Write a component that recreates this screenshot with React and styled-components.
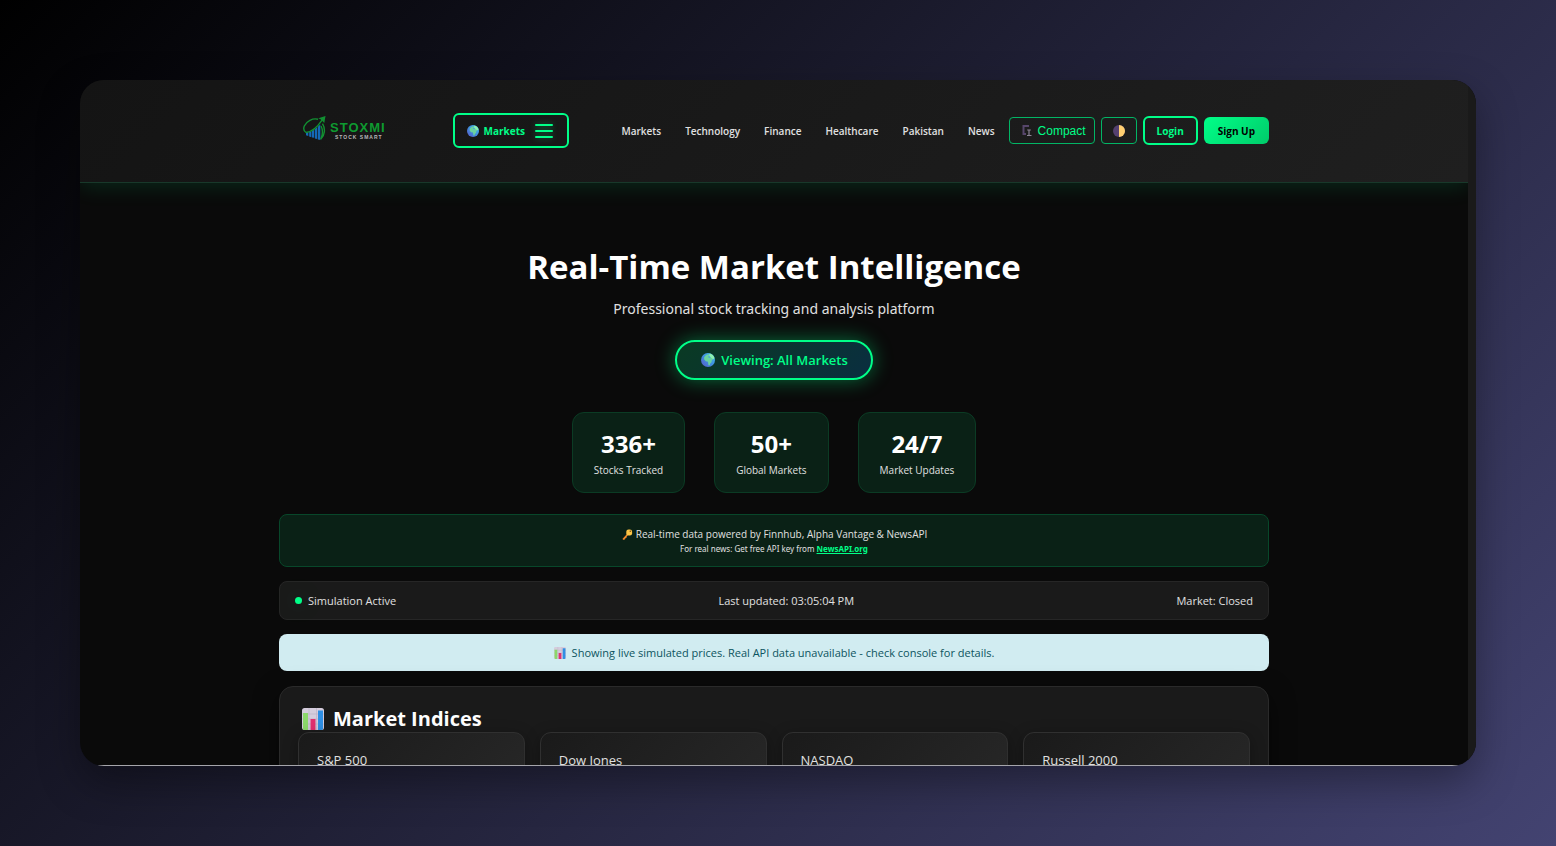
import styled, { createGlobalStyle, css } from "styled-components";

const GlobalStyle = createGlobalStyle`
  * {
    box-sizing: border-box;
    margin: 0;
    padding: 0;
  }
  body {
    font-family: "Open Sans", "Noto Sans", sans-serif;
    color: #e0e0e0;
    background-color: #000;
  }
  button {
    font-family: inherit;
    cursor: pointer;
  }
`;

const Backdrop = styled.div`
  display: flex;
  height: 100vh;
  padding: 80px;
  background: linear-gradient(135deg, #000 0%, #434371 100%);
`;

const Window = styled.div`
  flex: 1;
  display: flex;
  min-width: 0;
  border-radius: 24px;
  overflow: hidden;
  background-color: #0a0a0a;
  box-shadow: 0 16px 40px rgba(0, 0, 0, 0.35);
`;

const Page = styled.div`
  flex: 1;
  min-width: 0;
  overflow: hidden;
  border-bottom: 1px solid #a5a5ab;
`;

const ScrollTrack = styled.div`
  width: 8px;
  background-color: #1a1a1a;
`;

// HEADER
const Header = styled.header`
  padding: 33px 0 34px;
  background: linear-gradient(135deg, #141414, #1f1f1f);
  border-bottom: 1px solid #18382a;
  box-shadow: 0 4px 20px rgba(0, 255, 136, 0.12);
`;

const Container = styled.div`
  width: 100%;
  max-width: 990px;
  margin: 0 auto;
`;

const HeaderRow = styled(Container)`
  display: flex;
  align-items: center;
  padding-left: 24px;
`;

const Logo = styled.a`
  display: flex;
  align-items: flex-start;
  gap: 4px;
  height: 30px;
  margin-right: 67px;
  text-decoration: none;
  & > svg {
    width: 23px;
    height: 24px;
  }
`;

const LogoText = styled.span`
  display: flex;
  flex-direction: column;
  align-items: flex-end;
  padding-top: 6px;
  font-family: "Liberation Sans", Arial, sans-serif;
  font-weight: 700;
`;

const LogoName = styled.span`
  font-size: 13px;
  line-height: 12px;
  letter-spacing: 1px;
  color: #0e9a30;
`;

const LogoTagline = styled.span`
  font-size: 5px;
  line-height: 6px;
  letter-spacing: 1px;
  color: #b8b8b8;
  padding-right: 3px;
`;

const outline = css`
  background: transparent;
  color: #00ff88;
  border: 2px solid #00ff88;
`;

const MarketsButton = styled.button`
  ${outline}
  display: flex;
  align-items: center;
  height: 35px;
  padding: 0 14px 0 12px;
  border-radius: 6px;
  font-size: 10px;
  font-weight: 700;
  & > svg {
    margin-right: 5px;
  }
`;

const Burger = styled.span`
  display: flex;
  flex-direction: column;
  gap: 4px;
  width: 18px;
  margin-left: 10px;
  & > i {
    height: 2px;
    border-radius: 1px;
    background-color: #00ff88;
    box-shadow: 0 0 6px rgba(0, 255, 136, 0.4);
  }
`;

const Nav = styled.nav`
  display: flex;
  gap: 24px;
  margin-left: auto;
  & > a {
    color: #e0e0e0;
    font-size: 10px;
    font-weight: 600;
    text-decoration: none;
  }
`;

const Actions = styled.div`
  display: flex;
  align-items: center;
  gap: 6px;
  margin-left: 14px;
`;

const ToggleButton = styled.button`
  ${outline}
  display: flex;
  align-items: center;
  gap: 5px;
  height: 27px;
  padding: ${(props) => (props.$wide ? "0 8px 0 11px" : "0 11px")};
  border-width: 1px;
  border-color: #02b565;
  border-radius: 4px;
  & > span {
    font-family: "Liberation Sans", Arial, sans-serif;
    font-size: 12px;
  }
`;

const LoginButton = styled.button`
  ${outline}
  height: 29px;
  padding: 0 12px;
  border-radius: 6px;
  font-size: 10px;
  font-weight: 700;
`;

const SignUpButton = styled.button`
  height: 27px;
  padding: 0 14px;
  border: none;
  border-radius: 6px;
  background: linear-gradient(135deg, #00ff88, #00cc6a);
  color: #000;
  font-size: 10px;
  font-weight: 700;
`;

// HERO
const Hero = styled.section`
  display: flex;
  flex-direction: column;
  align-items: center;
  padding: 60px 0 21px;
`;

const Title = styled.h1`
  color: #fff;
  font-size: 33px;
  line-height: 48px;
  font-weight: 700;
`;

const Subtitle = styled.p`
  margin-top: 6px;
  font-family: "Noto Sans", sans-serif;
  font-size: 14px;
  line-height: 24px;
`;

const ViewingPill = styled.button`
  display: flex;
  align-items: center;
  gap: 6px;
  height: 40px;
  margin-top: 19px;
  padding: 0 23px 0 24px;
  border: 2px solid #00ff88;
  border-radius: 20px;
  background: linear-gradient(135deg, #0a3a23, #0a2e40);
  box-shadow: 0 0 20px rgba(0, 255, 136, 0.4);
  color: #00ff88;
  font-size: 13px;
  font-weight: 600;
`;

const Stats = styled.div`
  display: flex;
  gap: 29px;
  margin-top: 32px;
`;

const Stat = styled.div`
  padding: 15px 21px 14px;
  border: 1px solid #0b3b24;
  border-radius: 12px;
  background-color: #0a2116;
  text-align: center;
`;

const StatValue = styled.div`
  color: #fff;
  font-size: 24px;
  line-height: 32px;
  font-weight: 700;
`;

const StatLabel = styled.div`
  font-size: 10px;
  line-height: 16px;
  margin-top: 2px;
`;

// NOTICES
const ApiNotice = styled.div`
  padding: 11px 16px 10px;
  border: 1px solid #08472a;
  border-radius: 8px;
  background-color: #0a2116;
  text-align: center;
  font-size: 10px;
  line-height: 16px;
  & svg {
    vertical-align: middle;
    margin-right: 3px;
  }
  & small {
    display: block;
    font-family: "Noto Sans", sans-serif;
    font-size: 8px;
    line-height: 14px;
  }
  & a {
    color: #00ff88;
    font-weight: 700;
  }
`;

const StatusBar = styled.div`
  display: flex;
  align-items: center;
  justify-content: space-between;
  margin-top: 14px;
  padding: 9px 15px;
  border: 1px solid #262626;
  border-radius: 8px;
  background-color: #1a1a1a;
  font-size: 11px;
  line-height: 19px;
`;

const Status = styled.span`
  display: flex;
  align-items: center;
  gap: 6px;
  &::before {
    content: "";
    width: 7px;
    height: 7px;
    border-radius: 50%;
    background-color: #00ff88;
    box-shadow: 0 0 30px rgba(0, 255, 136, 0.3);
  }
`;

const Alert = styled.div`
  display: flex;
  align-items: center;
  justify-content: center;
  gap: 6px;
  margin-top: 14px;
  padding: 9px;
  border-radius: 8px;
  background-color: #d1ecf1;
  color: #0c5460;
  font-size: 11px;
  line-height: 19px;
`;

// INDICES
const Panel = styled.section`
  margin-top: 15px;
  padding: 18px;
  border: 1px solid #2a2a2a;
  border-radius: 14px;
  background-color: #1a1a1a;
  box-shadow: 0 8px 24px rgba(0, 0, 0, 0.5);
`;

const PanelTitle = styled.h2`
  display: flex;
  align-items: center;
  gap: 9px;
  padding-left: 4px;
  color: #fff;
  font-size: 20px;
  line-height: 27px;
`;

const Cards = styled.div`
  display: grid;
  grid-template-columns: repeat(4, 1fr);
  gap: 15px;
`;

const Card = styled.div`
  height: 120px;
  padding: 18px;
  border: 1px solid #303030;
  border-radius: 11px;
  background: linear-gradient(135deg, #1a1a1a, #2a2a2a);
  box-shadow: 0 4px 16px rgba(0, 0, 0, 0.3);
  font-size: 13px;
  line-height: 18px;
`;

const LogoMark = () => (
  <svg viewBox="0 0 23 24" fill="none">
    <path
      d="M3 16.500l2.300-.4v4l-2.300-.8zM6.200 15.800l2.200-.6v6l-2.200-.7zM9 14.700l2.200-.9v8l-2.200-.3zM11.900 13l2.200-1.500v11.500l-2.200-.5zM14.800 10.800l2.500-2.300V24l-2.500-.5z"
      fill="#1469b8"
    />
    <path
      d="M15 3.200C9.500 2 3.500 5 1.300 10c-1 2.800-.3 5.400 1.700 6.500C9 16 14.500 11 19 4.200M19.500 7.700c3 5 2.500 11.500-1.800 15.600 2-4.500 2.300-9.500.3-13.300"
      stroke="#128f32"
      strokeWidth="1.400"
    />
    <path d="M15.300 2.300L22.500 0l-1.200 7-2-1.900-1.800-1.800z" fill="#128f32" />
  </svg>
);

const GlobeIcon = ({ size }) => (
  <svg width={size} height={size} viewBox="0 0 16 16">
    <defs>
      <linearGradient id="ocean" x1="0" y1="1" x2="1" y2="0">
        <stop offset="0" stopColor="#5a58c8" />
        <stop offset="0.5" stopColor="#3f8fe0" />
        <stop offset="1" stopColor="#45c0f0" />
      </linearGradient>
    </defs>
    <circle cx="8" cy="8" r="8" fill="url(#ocean)" />
    <path
      d="M3.500 5C5 2.500 7 1.500 9 1.500l.5 1.500-1.500 1.500 1.500 1 3-.5 1.500 2-1.500 1-.5 2.500-1.500 1.500-.5 2H8.500l-.5-4-2.500-.5-1.800-2z"
      fill="#6ad2a0"
    />
    <path d="M9.500.6c3 .5 5.200 2.500 6 5.400l-1.500 1-2.500-1.500-2-2z" fill="#8cf0b0" />
  </svg>
);

const ChartIcon = ({ size }) => (
  <svg width={size} height={size} viewBox="0 0 22 22">
    <rect width="22" height="22" rx="2.500" fill="#d5cddd" />
    <path d="M0 6h22M0 11h22M0 16h22M7 0v22M14.500 0v22" stroke="#b8aec4" strokeWidth="0.6" />
    <path d="M1 5h5v17H2.500A1.500 1.500 0 0 1 1 20.500z" fill="#8bd76a" />
    <path d="M8.500 11h5v11h-5z" fill="#e0306f" />
    <path d="M16 2.500h5v18a1.500 1.500 0 0 1-1.500 1.500H16z" fill="#2f8fe4" />
  </svg>
);

const KeyIcon = () => (
  <svg width="12" height="12" viewBox="0 0 12 12" fill="none">
    <path d="M7 5L2 10.500M3 9.300l1 1M4.500 7.700l.9.9" stroke="#f08a2c" strokeWidth="1.600" />
    <rect x="5.300" y="0.600" width="5.800" height="5.800" rx="2.200" fill="#fcc545" />
    <circle cx="9.300" cy="2.300" r="0.800" fill="#7a4a1c" />
  </svg>
);

const ClampIcon = () => (
  <svg width="12" height="13" viewBox="0 0 12 13" fill="none">
    <path d="M8 2H2.500v8H5" stroke="#57466b" strokeWidth="2" />
    <path d="M8 5.500v5.500M6.200 6h3.600M6 11.500h4.500" stroke="#8d8496" strokeWidth="1.200" />
  </svg>
);

const HalfMoonIcon = () => (
  <svg width="12" height="12" viewBox="0 0 12 12">
    <circle cx="6" cy="6" r="6" fill="#54406f" />
    <path d="M6 0a6 6 0 0 1 0 12z" fill="#ffcf70" />
  </svg>
);

const navLinks = ["Markets", "Technology", "Finance", "Healthcare", "Pakistan", "News"];

const stats = [
  { value: "336+", label: "Stocks Tracked" },
  { value: "50+", label: "Global Markets" },
  { value: "24/7", label: "Market Updates" },
];

const indices = ["S&P 500", "Dow Jones", "NASDAQ", "Russell 2000"];

function App() {
  return (
    <Backdrop>
      <GlobalStyle />
      <Window>
        <Page>
          <Header>
            <HeaderRow>
              <Logo href="#">
                <LogoMark />
                <LogoText>
                  <LogoName>STOXMI</LogoName>
                  <LogoTagline>STOCK SMART</LogoTagline>
                </LogoText>
              </Logo>
              <MarketsButton>
                <GlobeIcon size={12} />
                Markets
                <Burger>
                  <i />
                  <i />
                  <i />
                </Burger>
              </MarketsButton>
              <Nav>
                {navLinks.map((link) => (
                  <a key={link} href="#">
                    {link}
                  </a>
                ))}
              </Nav>
              <Actions>
                <ToggleButton $wide>
                  <ClampIcon />
                  <span>Compact</span>
                </ToggleButton>
                <ToggleButton aria-label="Theme">
                  <HalfMoonIcon />
                </ToggleButton>
                <LoginButton>Login</LoginButton>
                <SignUpButton>Sign Up</SignUpButton>
              </Actions>
            </HeaderRow>
          </Header>
          <Container as="main">
            <Hero>
              <Title>Real-Time Market Intelligence</Title>
              <Subtitle>Professional stock tracking and analysis platform</Subtitle>
              <ViewingPill>
                <GlobeIcon size={14} />
                Viewing: All Markets
              </ViewingPill>
              <Stats>
                {stats.map((stat) => (
                  <Stat key={stat.label}>
                    <StatValue>{stat.value}</StatValue>
                    <StatLabel>{stat.label}</StatLabel>
                  </Stat>
                ))}
              </Stats>
            </Hero>
            <ApiNotice>
              <KeyIcon />
              Real-time data powered by Finnhub, Alpha Vantage &amp; NewsAPI
              <small>
                For real news: Get free API key from <a href="#">NewsAPI.org</a>
              </small>
            </ApiNotice>
            <StatusBar>
              <Status>Simulation Active</Status>
              <span>Last updated: 03:05:04 PM</span>
              <span>Market: Closed</span>
            </StatusBar>
            <Alert>
              <ChartIcon size={12} />
              Showing live simulated prices. Real API data unavailable - check console for details.
            </Alert>
            <Panel>
              <PanelTitle>
                <ChartIcon size={22} />
                Market Indices
              </PanelTitle>
              <Cards>
                {indices.map((name) => (
                  <Card key={name}>{name}</Card>
                ))}
              </Cards>
            </Panel>
          </Container>
        </Page>
        <ScrollTrack />
      </Window>
    </Backdrop>
  );
}

export default App;
